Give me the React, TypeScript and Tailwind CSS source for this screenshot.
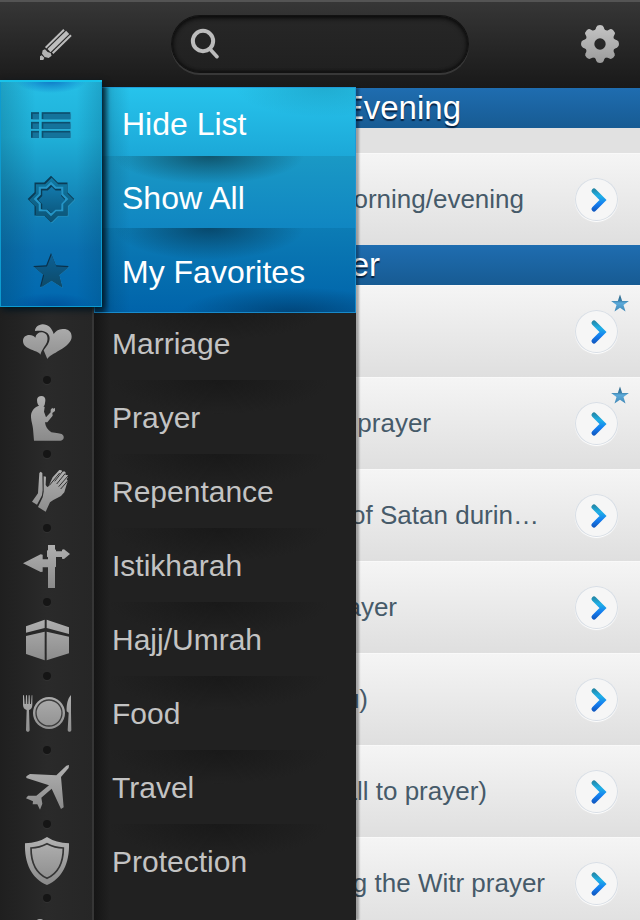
import React from "react";

type Row = { label: string; width: number; favorite?: boolean };

const morningRows: Row[] = [{ label: "morning/evening", width: 168 }];

const prayerRows: Row[] = [
  { label: "", width: 0, favorite: true },
  { label: "prayer", width: 75, favorite: true },
  { label: "of Satan durin…", width: 183 },
  { label: "ayer", width: 41 },
  { label: "u)", width: 12 },
  { label: "all to prayer)", width: 131 },
  { label: "g the Witr prayer", width: 189 },
];

function starPoints(cx: number, cy: number, tips: number, outer: number, inner: number) {
  const points: string[] = [];
  for (let i = 0; i < tips * 2; i++) {
    const r = i % 2 === 0 ? outer : inner;
    const a = (Math.PI * i) / tips - Math.PI / 2;
    points.push(`${(cx + r * Math.cos(a)).toFixed(1)},${(cy + r * Math.sin(a)).toFixed(1)}`);
  }
  return points.join(" ");
}

function SharedGradients() {
  return (
    <svg className="absolute h-0 w-0" aria-hidden="true">
      <defs>
        <linearGradient id="chevron" gradientUnits="userSpaceOnUse" x1="0" y1="10" x2="0" y2="33">
          <stop offset="0" stopColor="#23809c" />
          <stop offset="0.35" stopColor="#1fb0e6" />
          <stop offset="0.7" stopColor="#147df0" />
          <stop offset="1" stopColor="#1058c0" />
        </linearGradient>
        <linearGradient id="fav" x1="0" y1="0" x2="0" y2="1">
          <stop offset="0" stopColor="#2c6688" />
          <stop offset="0.35" stopColor="#3b7fa8" />
          <stop offset="0.5" stopColor="#5cabdb" />
          <stop offset="1" stopColor="#3f86b4" />
        </linearGradient>
        <linearGradient id="engraved" x1="0" y1="0" x2="0" y2="1">
          <stop offset="0" stopColor="#117aa4" />
          <stop offset="1" stopColor="#0b5376" />
        </linearGradient>
        <linearGradient id="innerStar" x1="0" y1="0" x2="0" y2="1">
          <stop offset="0" stopColor="#1379ab" />
          <stop offset="1" stopColor="#0b5a82" />
        </linearGradient>
        <linearGradient id="engravedStar" x1="0" y1="0" x2="0" y2="1">
          <stop offset="0" stopColor="#0c6095" />
          <stop offset="1" stopColor="#0d4a68" />
        </linearGradient>
        <linearGradient id="gear" x1="0" y1="0" x2="0" y2="1">
          <stop offset="0" stopColor="#c4c4c4" />
          <stop offset="1" stopColor="#9b9b9b" />
        </linearGradient>
      </defs>
    </svg>
  );
}

function PencilIcon() {
  return (
    <svg viewBox="114 78 108 108" className="h-9 w-9" aria-hidden="true" stroke="#bdbdbd" fill="#b4b4b4">
      <path d="M137 143 192 89" strokeWidth="6" />
      <path d="M147 152 203 97" strokeWidth="13" />
      <path d="M158 160 213 106" strokeWidth="6" />
      <path stroke="none" d="M128 151 135 148 143 156 152 159 155 167 146 174 134 171 126 161Z" />
      <path stroke="none" d="M120 169 125 166 133 173 130 180 120 180Z" />
    </svg>
  );
}

function SearchIcon() {
  return (
    <svg viewBox="570 84 90 96" className="h-8 w-[30px] shrink-0" aria-hidden="true" fill="none" stroke="#bcbcbc">
      <circle cx="609" cy="123" r="30.5" strokeWidth="12" />
      <path d="M629 146 651 170" strokeWidth="11" strokeLinecap="round" />
    </svg>
  );
}

function GearIcon() {
  return (
    <svg viewBox="-57 -57 114 114" className="h-[38px] w-[38px]" aria-hidden="true">
      <mask id="gearShape" maskUnits="userSpaceOnUse" x="-57" y="-57" width="114" height="114">
        <circle r="44" fill="#fff" />
        {[0, 45, 90, 135].map((a) => (
          <path
            key={a}
            d="M-17 -40 Q-12 -45 -11 -51 Q-9 -57 0 -57 Q9 -57 11 -51 Q12 -45 17 -40 V40 Q12 45 11 51 Q9 57 0 57 Q-9 57 -11 51 Q-12 45 -17 40Z"
            fill="#fff"
            transform={`rotate(${a})`}
          />
        ))}
        <circle r="17" fill="#000" />
      </mask>
      <rect x="-57" y="-57" width="114" height="114" fill="url(#gear)" mask="url(#gearShape)" />
    </svg>
  );
}

function ListIcon() {
  const rows = [129, 158, 185];
  return (
    <svg viewBox="90 126 126 86" className="h-[29px] w-[42px]" aria-hidden="true">
      {rows.map((y) => (
        <g key={y}>
          <rect x="94" y={y + 1} width="26" height="23" fill="#2cabd2" />
          <rect x="126" y={y + 1} width="88" height="23" fill="#2cabd2" />
          <rect x="93" y={y} width="24" height="21" fill="#0c4f6e" />
          <rect x="125" y={y} width="86" height="21" fill="#0c4f6e" />
          <rect x="98" y={y + 5} width="19" height="16" fill="#14739b" />
          <rect x="130" y={y + 5} width="81" height="16" fill="#14739b" />
        </g>
      ))}
    </svg>
  );
}

function OctagramIcon() {
  return (
    <svg viewBox="-75 -75 150 150" className="h-[50px] w-[50px]" aria-hidden="true">
      <polygon points={starPoints(3, 3, 8, 70, 53.6)} fill="#2590bd" />
      <polygon points={starPoints(0, 0, 8, 70, 53.6)} fill="#0a3c56" />
      <polygon points={starPoints(2, 3, 8, 67, 51.3)} fill="url(#engraved)" />
      <polygon points={starPoints(0, 0, 8, 52, 39.8)} fill="#2595c6" />
      <polygon points={starPoints(0, 0, 8, 43, 33)} fill="#0a3c56" />
      <polygon points={starPoints(2, 3, 8, 40, 30.6)} fill="url(#innerStar)" />
    </svg>
  );
}

function StarIcon() {
  return (
    <svg viewBox="-60 -60 120 118" className="h-[39px] w-10" aria-hidden="true">
      <polygon points={starPoints(2, 3, 5, 57, 25)} fill="#2683b8" />
      <polygon points={starPoints(0, 0, 5, 57, 25)} fill="#0a314b" />
      <polygon points={starPoints(2, 3, 5, 55, 24)} fill="url(#engravedStar)" />
    </svg>
  );
}

const groove = "#303030";

const categories: { name: string; top: number; art: React.ReactNode }[] = [
  {
    name: "Marriage",
    top: 0,
    art: (
      <>
        <path d="M142 147C146 132 215 112 215 80C215 64 203 56 188 57C175 58 166 64 161 72C156 54 144 43 128 43C115 44 105 52 105 63C118 62 131 60 142 69C151 78 151 91 143 104L131 121Z" />
        <path d="M121 134C116 120 69 120 69 93C69 82 77 75 88 75C96 75 102 78 106 83C108 72 116 66 127 67C140 69 146 82 141 96C137 107 126 117 121 134Z" />
      </>
    ),
  },
  {
    name: "Prayer",
    top: 222,
    art: (
      <>
        <path d="M111 270C111 262 117 258 124 258C132 258 137 263 136 273L134 284C132 290 128 292 122 291C115 289 111 280 111 270Z" />
        <path d="M115 288C100 294 92 306 93 322C94 336 98 345 99 356L102 392H178C188 392 192 386 191 380C190 373 182 370 170 369L154 367C143 360 136 350 135 337L142 337L158 317L157 309L165 303V294L159 296L157 293L152 299V307L138 322L132 305L134 291L124 286Z" />
      </>
    ),
  },
  {
    name: "Repentance",
    top: 444,
    art: (
      <>
        <path d="M118 489 122 485 127 489 128 540 126 556 111 584 96 575 114 550Z" />
        <path d="M131 499 138 500 137 525 141 530 146 528 158 502 178 480 185 481 186 486 193 484 198 489 196 495 203 495 204 501 200 508 204 514 201 520 193 547 183 558 160 570 150 577 137 605 114 591 128 562 131 545Z" />
        <g stroke={groove} strokeWidth="3" fill="none">
          <path d="M187 485 164 514" />
          <path d="M196 490 170 522" />
          <path d="M204 498 176 530" />
          <path d="M204 512 182 537" />
          <path d="M179 489 149 525 141 530" />
        </g>
      </>
    ),
  },
  {
    name: "Istikharah",
    top: 6,
    art: (
      <path d="M144 45H165V58L168 60V64H186V59L192 58L210 72L192 87L186 86V81H168V110L165 112V174H144V112H128V125L122 126L69 100L122 73L128 74V88H144V82L141 80V62L144 60Z" />
    ),
  },
  {
    name: "Hajj/Umrah",
    top: 228,
    art: (
      <>
        <path d="M78 289 134 269V294L78 308Z" />
        <path d="M140 269 207 292V312L140 294Z" />
        <path d="M78 318 134 305V391L78 372Z" />
        <path d="M140 305 207 320V370L140 391Z" />
      </>
    ),
  },
  {
    name: "Food",
    top: 450,
    art: (
      <>
        <circle cx="147" cy="549" r="48" />
        <circle cx="147" cy="549" r="39" fill="none" stroke="#3c3c3c" strokeWidth="4" />
        <path d="M69 496H72L74 522H77L78 496H81L82 522H85L86 496H89L90 522H93L95 496H97V524C97 534 92 538 87 540L89 600C89 607 78 607 78 600L80 540C73 538 69 532 69 524Z" />
        <path d="M213 495V547L214 600C214 607 203 607 203 600L206 548L200 544C199 525 203 505 213 495Z" />
      </>
    ),
  },
  {
    name: "Travel",
    top: 42,
    art: (
      <path d="M207 75 206 84 183 111 191 202 183 207 155 146 124 173 127 191 120 209 112 193 98 193 99 184 78 175 84 167 109 167 147 136 79 114 79 109 90 102 169 106 199 77Z" />
    ),
  },
  {
    name: "Protection",
    top: 264,
    art: (
      <>
        <path d="M141 291Q168 309 207 310C209 370 187 416 141 435C95 416 73 370 75 310Q114 309 141 291Z" />
        <path
          d="M141 311Q164 323 190 324C190 368 174 400 141 415C108 400 93 368 93 324Q118 323 141 311Z"
          fill="none"
          stroke="#353535"
          strokeWidth="5"
        />
      </>
    ),
  },
];

function CategoryIcon({ id, top, children }: { id: string; top: number; children: React.ReactNode }) {
  return (
    <svg viewBox={`57 ${top} 168 198`} className="h-[66px] w-14" aria-hidden="true" fill={`url(#${id})`}>
      <defs>
        <linearGradient id={id} gradientUnits="userSpaceOnUse" x1="0" y1={top + 30} x2="0" y2={top + 170}>
          <stop offset="0" stopColor="#b2b2b2" />
          <stop offset="1" stopColor="#8a8a8a" />
        </linearGradient>
      </defs>
      {children}
    </svg>
  );
}

function SectionTitle({ text, width }: { text: string; width: number }) {
  return (
    <h2 className="flex h-10 items-center bg-linear-to-b from-[#1f6db0] to-[#175b93] text-[33px] leading-10 text-white [text-shadow:0_2px_1px_rgba(0,20,45,0.8)]">
      <span className="flex justify-end whitespace-pre" style={{ width }}>
        {text}
      </span>
    </h2>
  );
}

function DuaRow({ row }: { row: Row }) {
  return (
    <li className="relative flex h-[92px] items-center justify-between bg-linear-to-b from-[#f5f5f5] to-[#dfdfdf] pr-[22px] shadow-[inset_0_1px_0_#f9f9f9]">
      <span className="flex justify-end text-[26px] leading-8 whitespace-pre text-[#465a69]" style={{ width: row.width }}>
        {row.label}
      </span>
      <button
        type="button"
        aria-label="Open"
        className="h-[43px] w-[43px] shrink-0 rounded-full bg-[#f6f6f6] shadow-[inset_0_0_0_1px_#d8dee5,0_1px_1px_#ffffff]"
      >
        <svg viewBox="0 0 43 43" className="h-full w-full" aria-hidden="true">
          <path d="M19 13 28 22 19 31" fill="none" stroke="url(#chevron)" strokeWidth="5" strokeLinecap="round" />
        </svg>
      </button>
      {row.favorite && (
        <svg viewBox="-10 -10 20 20" className="absolute top-2 right-2.5 h-5 w-5" aria-hidden="true">
          <polygon points={starPoints(0, 1, 5, 9.4, 3.7)} fill="url(#fav)" />
        </svg>
      )}
    </li>
  );
}

export default function App() {
  return (
    <div className="flex h-screen flex-col overflow-hidden bg-[#1c1c1c] font-['Liberation_Sans',Arial,sans-serif]">
      <SharedGradients />
      <header className="grid h-[88px] shrink-0 grid-cols-[1fr_296px_1fr] items-center bg-linear-to-b from-[#373737] to-[#191919] shadow-[inset_0_2px_0_#545454]">
        <button type="button" aria-label="Edit" className="ml-[38px] justify-self-start">
          <PencilIcon />
        </button>
        <label className="flex h-14 items-center rounded-[28px] bg-linear-to-b from-[#272727] to-[#202020] px-[18px] shadow-[inset_0_2px_5px_#080808,inset_0_-1px_3px_#111111,0_0_0_1px_#121212,0_2px_0_1px_#383838]">
          <SearchIcon />
          <input type="search" aria-label="Search" className="ml-2 w-full min-w-0 bg-transparent text-[26px] text-[#bdbdbd] outline-none" />
        </label>
        <button type="button" aria-label="Settings" className="mr-[21px] justify-self-end">
          <GearIcon />
        </button>
      </header>

      <main className="flex min-h-0 flex-1">
        <nav className="relative z-10 flex w-[356px] shrink-0 bg-[#212121] shadow-[3px_0_2px_rgba(0,0,0,0.3)]">
          <div className="relative z-20 w-[94px] shrink-0 bg-linear-to-r from-[#1f1f1f] via-[#2a2a2a] to-[#262626] shadow-[inset_-2px_0_0_#363636]">
            <ul className="relative z-10 -mt-2 h-[227px] w-[102px] bg-[radial-gradient(36px_13px_at_50%_0,#0d74c4,transparent),radial-gradient(45px_14px_at_50%_100%,#00519a,transparent),linear-gradient(to_right,rgba(0,50,70,0.22),transparent_35%,transparent_75%,rgba(0,60,90,0.2)),linear-gradient(#26bfe6,#1fb0d8_25%,#1487b9_52%,#0a70b0_75%,#0068b0)] pt-[9px] shadow-[inset_0_2px_0_#19c3ea,inset_0_0_0_1px_#0d9bd0,2px_3px_7px_#00141f]">
              {[
                { name: "Hide List", icon: <ListIcon /> },
                { name: "Show All", icon: <OctagramIcon /> },
                { name: "My Favorites", icon: <StarIcon /> },
              ].map((item) => (
                <li key={item.name}>
                  <button type="button" aria-label={item.name} className="flex h-[73px] w-full items-center justify-center">
                    {item.icon}
                  </button>
                </li>
              ))}
            </ul>
            <ul className="mt-[3px]">
              {categories.map((c) => (
                <li key={c.name} className="flex h-[74px] flex-col items-center">
                  <button type="button" aria-label={c.name}>
                    <CategoryIcon id={`metal-${c.name.slice(0, 4)}`} top={c.top}>
                      {c.art}
                    </CategoryIcon>
                  </button>
                  <span className="h-2 w-2 rounded-full bg-[#151515] shadow-[0_1px_0_#333333]" />
                </li>
              ))}
              <li className="flex justify-center">
                <CategoryIcon id="metal-more" top={486}>
                  <path d="M108 545Q110 537 120 537Q130 537 132 545Z" />
                </CategoryIcon>
              </li>
            </ul>
          </div>

          <div className="flex min-w-0 flex-1 flex-col bg-[linear-gradient(to_right,#151515,transparent_16px)]">
            <ul className="relative z-10 -mt-px h-[226px] shrink-0 bg-no-repeat shadow-[inset_0_0_0_1px_rgba(30,150,215,0.8)] [background-image:radial-gradient(95px_28px_at_115px_0,rgba(12,62,80,0.75),transparent),radial-gradient(95px_32px_at_115px_0,rgba(5,45,70,0.65),transparent),radial-gradient(110px_26px_at_75%_100%,rgba(0,50,90,0.6),transparent),radial-gradient(90px_30px_at_88%_0,rgba(20,130,160,0.35),transparent),linear-gradient(to_right,rgba(0,30,50,0.6)_8px,rgba(0,40,60,0.15)_16px,transparent_36px),linear-gradient(#27c4ec,#1ca8d8_69px,#1a99c5_69px,#1086c2_141px,#0c7cb5_141px,#0063aa)] [background-position:0_69px,0_141px,0_0,0_0,0_0,0_0]">
              {["Hide List", "Show All", "My Favorites"].map((name) => (
                <li key={name}>
                  <button type="button" className="h-[74px] w-full pl-7 text-left text-[32px] leading-10 text-white">
                    {name}
                  </button>
                </li>
              ))}
            </ul>
            <ul className="-mt-[7px] shrink-0 bg-[radial-gradient(110px_34px_at_125px_0,#191919,transparent)] bg-[length:100%_74px]">
              {categories.map((c) => (
                <li key={c.name}>
                  <button type="button" className="h-[74px] w-full pt-0.5 pl-[18px] text-left text-[30px] leading-9 text-[#c3c3c3]">
                    {c.name}
                  </button>
                </li>
              ))}
            </ul>
          </div>
        </nav>

        <section className="min-w-0 flex-1 overflow-hidden bg-[#e1e1e1]">
          <SectionTitle text="Evening" width={105} />
          <ul className="pt-[25px]">
            {morningRows.map((row) => (
              <DuaRow key={row.label} row={row} />
            ))}
          </ul>
          <SectionTitle text="er" width={24} />
          <ul>
            {prayerRows.map((row) => (
              <DuaRow key={row.label} row={row} />
            ))}
          </ul>
        </section>
      </main>
    </div>
  );
}
